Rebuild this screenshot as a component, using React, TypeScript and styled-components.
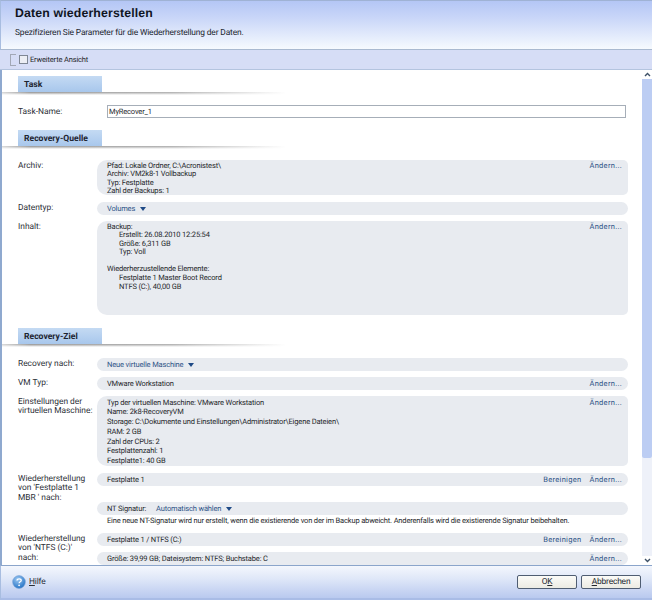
import React from 'react';
import styled, { createGlobalStyle } from 'styled-components';

const GlobalStyle = createGlobalStyle`
    html, body {
        margin: 0;
        padding: 0;
        background: #ffffff;
    }
    body {
        font-family: Roboto, "Liberation Sans", Arial, sans-serif;
        font-size: 7.5px;
        letter-spacing: -0.16px;
        text-rendering: geometricPrecision;
        color: #26282c;
    }
`

const Dialog = styled.div`
    width: 652px;
    height: 600px;
    display: flex;
    flex-direction: column;
    overflow: hidden;
`

const Header = styled.div`
    height: 50px;
    box-sizing: border-box;
    padding: 5px 15px 0 14px;
    background: linear-gradient(#b4c6f5, #c9d6f8 35%, #f6fafe);
    border-top: 1px solid #9fb2d4;
    border-left: 1px solid #a8bde0;
    border-bottom: 1px solid #a9b9d0;
`

const Title = styled.h1`
    margin: 0 0 7px;
    font-family: "Liberation Sans", Arial, sans-serif;
    font-size: 12.3px;
    line-height: 15px;
    font-weight: 700;
    color: #10151f;
    letter-spacing: 0.15px;
`

const Subtitle = styled.div`
    font-size: 8.4px;
    line-height: 11px;
    letter-spacing: -0.14px;
    color: #22262e;
`

const Toolbar = styled.div`
    height: 20px;
    box-sizing: border-box;
    display: flex;
    align-items: center;
    padding-left: 10px;
    background: #d6ddf6;
    border-bottom: 1px solid #b4c4df;
`

const Handle = styled.div`
    width: 6px;
    height: 12px;
    margin-right: 3px;
    border: 1px solid #a2a8b6;
    border-right: none;
    box-sizing: border-box;
`

const Checkbox = styled.div`
    width: 9px;
    height: 9px;
    margin-right: 2px;
    box-sizing: border-box;
    border: 1px solid #7f8794;
    background: #eceef4;
`

const Body = styled.div`
    flex: 1;
    min-height: 0;
    display: flex;
    border-left: 2px solid #8fa9cf;
`

const Content = styled.div`
    flex: 1;
    min-width: 0;
    overflow: hidden;
    padding-top: 6px;
`

const Section = styled.div<{ $top?: number }>`
    margin-top: ${p => p.$top || 0}px;
`

const SectionTab = styled.div`
    width: 84px;
    height: 16px;
    margin-left: 16px;
    box-sizing: border-box;
    padding: 2px 0 0 6px;
    font-size: 8.6px;
    line-height: 14px;
    font-weight: 700;
    letter-spacing: 0;
    color: #1d2430;
    background: linear-gradient(#c4daf3, #a8c7ec);
`

const SectionRule = styled.div`
    width: 284px;
    height: 3px;
    background: linear-gradient(90deg, #d2d2d2, #8f8f8f 10%, #a8a8a8 60%, #ffffff);
    mask-image: linear-gradient(#000, transparent);
`

const Row = styled.div<{ $top: number }>`
    display: grid;
    grid-template-columns: 95px 531px;
    margin-top: ${p => p.$top}px;
`

const Label = styled.div<{ $pad?: number }>`
    padding: ${p => p.$pad ?? 2}px 0 0 16px;
    font-size: 8.4px;
    line-height: 9.4px;
    letter-spacing: 0;
    color: #2d3138;
`

const TaskInput = styled.div`
    height: 13px;
    margin-left: 10px;
    width: 519px;
    box-sizing: border-box;
    border: 1px solid #a6aeb8;
    padding-left: 1px;
    line-height: 11px;
    color: #26282c;
`

const Panel = styled.div<{ $height: number; $line?: number }>`
    height: ${p => p.$height}px;
    box-sizing: border-box;
    padding: 1.5px 6px 0 10px;
    display: flex;
    justify-content: space-between;
    background: #e8ebf0;
    border-radius: 10px 5px 5px 10px;
    line-height: ${p => p.$line || 8.6}px;
`

const Pill = styled.div`
    height: 13px;
    box-sizing: border-box;
    padding: 0 6px 0 10px;
    display: flex;
    align-items: center;
    justify-content: space-between;
    background: #e8ebf0;
    border-radius: 6.5px;
`

const Lines = styled.div`
    white-space: pre;
`

const Indent = styled.div`
    padding-left: 12px;
`

const Gap = styled.div`
    height: 8.6px;
`

const Links = styled.div`
    display: flex;
    gap: 8px;
`

const Link = styled.span`
    color: #2e5487;
    letter-spacing: 0.3px;
`

const Dropdown = styled.span`
    color: #2e5487;
    display: inline-flex;
    align-items: center;
    gap: 5px;

    &::after {
        content: '';
        border-left: 3.5px solid transparent;
        border-right: 3.5px solid transparent;
        border-top: 4px solid #1f4a86;
    }
`

const SignatureLabel = styled.span`
    display: inline-block;
    width: 49px;
`

const Note = styled.div`
    padding: 1px 0 0 10px;
    white-space: nowrap;
    height: 12px;
    box-sizing: border-box;
    line-height: 10px;
`

const Scrollbar = styled.div`
    width: 10px;
    background: #f2f5fb;
    display: flex;
    flex-direction: column;
    align-items: center;
`

const ScrollArrow = styled.div`
    height: 9px;
    width: 100%;
    display: flex;
    align-items: center;
    justify-content: center;
    flex-shrink: 0;
    background: #ffffff;
`

const ScrollThumb = styled.div`
    width: 100%;
    height: 379px;
    background: #bccdf3;
    border-radius: 0 0 2px 2px;
`

const ScrollTrack = styled.div`
    flex: 1;
    width: 100%;
    background: #eef1f9;
`

const Footer = styled.div`
    height: 35px;
    box-sizing: border-box;
    display: flex;
    align-items: center;
    justify-content: space-between;
    padding: 0 11px 0 11px;
    background: linear-gradient(#f4f7fd, #dfe7f8 40%, #b9c9ef);
    border-top: 1px solid #8ba5cb;
    border-left: 1px solid #a8bde0;
    border-bottom: 2px solid #a9bce6;
`

const Help = styled.div`
    display: flex;
    align-items: center;
    gap: 3px;
    font-size: 8.4px;
    color: #2a2f38;
`

const Buttons = styled.div`
    display: flex;
    gap: 4px;
`

const Button = styled.div`
    width: 60px;
    height: 14px;
    box-sizing: border-box;
    border: 1px solid #4f5d72;
    border-radius: 2px;
    background: linear-gradient(#fbfbf8, #ecebe3);
    text-align: center;
    font-size: 8.4px;
    line-height: 13px;
    color: #23272e;
`

const Chevron: React.FC<{ up?: boolean }> = ({ up }) => (
    <svg width="7" height="5" viewBox="0 0 7 5">
        <path d={up ? 'M1 4 L3.5 1.5 L6 4' : 'M1 1 L3.5 3.5 L6 1'} fill="none" stroke="#3d5066" strokeWidth="1.4" />
    </svg>
)

const HelpIcon: React.FC = () => (
    <svg width="14" height="14" viewBox="0 0 14 14">
        <defs>
            <radialGradient id="help" cx="40%" cy="30%" r="75%">
                <stop offset="0%" stopColor="#9cc8f2" />
                <stop offset="100%" stopColor="#1f6fc4" />
            </radialGradient>
        </defs>
        <circle cx="7" cy="7" r="6.4" fill="url(#help)" stroke="#7fa6d6" strokeWidth="0.6" />
        <path d="M5 5.4 C5 3.4 9.2 3.4 9.2 5.4 C9.2 6.8 7.1 6.8 7.1 8.3" fill="none" stroke="#ffffff" strokeWidth="1.3" />
        <circle cx="7.1" cy="10.3" r="0.9" fill="#ffffff" />
    </svg>
)

const Change: React.FC = () => <Link>Ändern...</Link>

const App: React.FC = () => {
    return (
        <Dialog>
            <GlobalStyle />
            <Header>
                <Title>Daten wiederherstellen</Title>
                <Subtitle>Spezifizieren Sie Parameter für die Wiederherstellung der Daten.</Subtitle>
            </Header>
            <Toolbar>
                <Handle />
                <Checkbox />
                Erweiterte Ansicht
            </Toolbar>
            <Body>
                <Content>
                    <Section>
                        <SectionTab>Task</SectionTab>
                        <SectionRule />
                    </Section>
                    <Row $top={10}>
                        <Label $pad={3}>Task-Name:</Label>
                        <TaskInput>MyRecover_1</TaskInput>
                    </Row>
                    <Section $top={12}>
                        <SectionTab>Recovery-Quelle</SectionTab>
                        <SectionRule />
                    </Section>
                    <Row $top={11}>
                        <Label>Archiv:</Label>
                        <Panel $height={35}>
                            <Lines>
                                Pfad: Lokale Ordner, C:\Acronistest\{'\n'}
                                Archiv: VM2k8-1 Vollbackup{'\n'}
                                Typ: Festplatte{'\n'}
                                Zahl der Backups: 1
                            </Lines>
                            <Change />
                        </Panel>
                    </Row>
                    <Row $top={7}>
                        <Label>Datentyp:</Label>
                        <Pill>
                            <Dropdown>Volumes</Dropdown>
                        </Pill>
                    </Row>
                    <Row $top={6}>
                        <Label>Inhalt:</Label>
                        <Panel $height={94}>
                            <div>
                                Backup:
                                <Indent>Erstellt: 26.08.2010 12:25:54</Indent>
                                <Indent>Größe: 6,311 GB</Indent>
                                <Indent>Typ: Voll</Indent>
                                <Gap />
                                Wiederherzustellende Elemente:
                                <Indent>Festplatte 1 Master Boot Record</Indent>
                                <Indent>NTFS (C:), 40,00 GB</Indent>
                            </div>
                            <Change />
                        </Panel>
                    </Row>
                    <Section $top={13}>
                        <SectionTab>Recovery-Ziel</SectionTab>
                        <SectionRule />
                    </Section>
                    <Row $top={11}>
                        <Label>Recovery nach:</Label>
                        <Pill>
                            <Dropdown>Neue virtuelle Maschine</Dropdown>
                        </Pill>
                    </Row>
                    <Row $top={6}>
                        <Label>VM Typ:</Label>
                        <Pill>
                            VMware Workstation
                            <Change />
                        </Pill>
                    </Row>
                    <Row $top={6}>
                        <Label>Einstellungen der<br />virtuellen Maschine:</Label>
                        <Panel $height={70} $line={9.8}>
                            <Lines>
                                Typ der virtuellen Maschine: VMware Workstation{'\n'}
                                Name: 2k8-RecoveryVM{'\n'}
                                Storage: C:\Dokumente und Einstellungen\Administrator\Eigene Dateien\{'\n'}
                                RAM: 2 GB{'\n'}
                                Zahl der CPUs: 2{'\n'}
                                Festplattenzahl: 1{'\n'}
                                Festplatte1: 40 GB
                            </Lines>
                            <Change />
                        </Panel>
                    </Row>
                    <Row $top={7}>
                        <Label>Wiederherstellung<br />von 'Festplatte 1<br />MBR ' nach:</Label>
                        <div>
                            <Pill>
                                Festplatte 1
                                <Links>
                                    <Link>Bereinigen</Link>
                                    <Change />
                                </Links>
                            </Pill>
                            <Section $top={16}>
                                <Pill>
                                    <span>
                                        <SignatureLabel>NT Signatur:</SignatureLabel>
                                        <Dropdown>Automatisch wählen</Dropdown>
                                    </span>
                                </Pill>
                            </Section>
                            <Note>
                                Eine neue NT-Signatur wird nur erstellt, wenn die existierende von der im Backup abweicht. Anderenfalls wird die existierende Signatur beibehalten.
                            </Note>
                        </div>
                    </Row>
                    <Row $top={6}>
                        <Label>Wiederherstellung<br />von 'NTFS (C:)'<br />nach:</Label>
                        <div>
                            <Pill>
                                Festplatte 1 / NTFS (C:)
                                <Links>
                                    <Link>Bereinigen</Link>
                                    <Change />
                                </Links>
                            </Pill>
                            <Section $top={6}>
                                <Pill>
                                    Größe: 39,99 GB; Dateisystem: NTFS; Buchstabe: C
                                    <Change />
                                </Pill>
                            </Section>
                        </div>
                    </Row>
                </Content>
                <Scrollbar>
                    <ScrollArrow><Chevron up /></ScrollArrow>
                    <ScrollThumb />
                    <ScrollTrack />
                    <ScrollArrow><Chevron /></ScrollArrow>
                </Scrollbar>
            </Body>
            <Footer>
                <Help>
                    <HelpIcon />
                    <span><u>H</u>ilfe</span>
                </Help>
                <Buttons>
                    <Button>O<u>K</u></Button>
                    <Button><u>A</u>bbrechen</Button>
                </Buttons>
            </Footer>
        </Dialog>
    )
}

export default App;
